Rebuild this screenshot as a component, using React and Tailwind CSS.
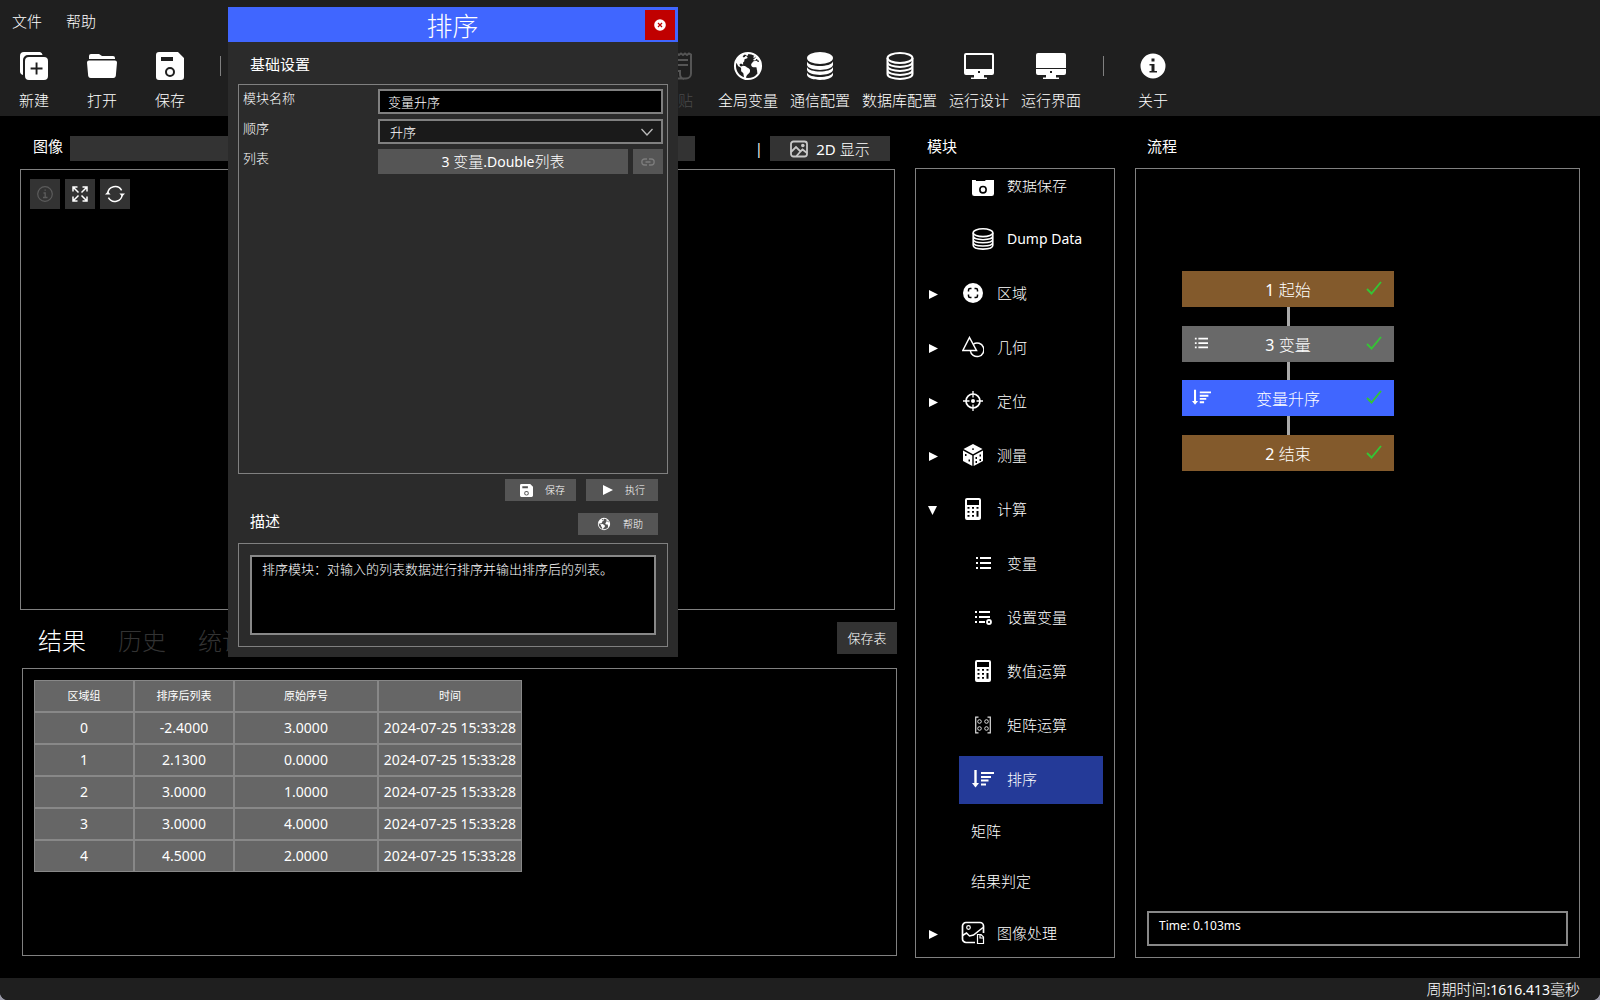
import { useState } from "react";
import { IoEarth } from "react-icons/io5";

/* ---------- icons ---------- */

const Svg = ({ size = 28, box = 28, className = "", children }) => (
  <svg width={size} height={size} viewBox={`0 0 ${box} ${box}`} fill="none" aria-hidden="true" className={className}>
    {children}
  </svg>
);

const NewIcon = () => (
  <Svg>
    <path d="M4 0H18a4 4 0 0 1 4.6 3H8a5 5 0 0 0-5 5v15A4 4 0 0 1 0 19V4a4 4 0 0 1 4-4Z" fill="#fff" />
    <path fillRule="evenodd" d="M9 5h15a4 4 0 0 1 4 4v15a4 4 0 0 1-4 4H9a4 4 0 0 1-4-4V9a4 4 0 0 1 4-4Zm6.6 5.600v5h-5v1.900h5v5h1.900v-5h5v-1.900h-5v-5Z" fill="#fff" />
  </Svg>
);

const OpenIcon = () => (
  <Svg size={30} box={30}>
    <path d="M2 8V5a2 2 0 0 1 2-2h8l3 2h11a2 2 0 0 1 2 2v1Z" fill="#fff" />
    <path d="M2 9.500h26a2 2 0 0 1 2 2L28.800 25a2.500 2.500 0 0 1-2.500 2H3.700a2.500 2.500 0 0 1-2.500-2L0 11.500a2 2 0 0 1 2-2Z" fill="#fff" />
  </Svg>
);

const SaveIcon = ({ size = 28 }) => (
  <Svg size={size}>
    <path
      fillRule="evenodd"
      d="M3 0h19l6 6v19a3 3 0 0 1-3 3H3a3 3 0 0 1-3-3V3a3 3 0 0 1 3-3Zm2 5v4h12V5Zm9 10a5 5 0 1 0 0 10 5 5 0 0 0 0-10Zm0 2a3 3 0 1 1 0 6 3 3 0 0 1 0-6Z"
      fill="#fff"
    />
  </Svg>
);

const PasteIcon = () => (
  <Svg>
    <path d="M5 1.500l2 1.500 2-1.500 2 1.500 2-1.500 2 1.500 2-1.500 2 1.500 2-1.500 2 1.500 2-1.500 2 1v19a5 5 0 0 1-5 5H8M20 27a5 5 0 0 1-4-5v-3H5M12 8h12M12 13h12" stroke="#555" strokeWidth="2" />
  </Svg>
);

const DatabaseSolid = () => (
  <Svg>
    <ellipse cx="14" cy="6" rx="13" ry="6" fill="#fff" />
    <path d="M1 9.500c2 6 24 6 26 0v3.500c-2 6.500-24 6.500-26 0ZM1 15c2 6 24 6 26 0v3c-2 6.500-24 6.500-26 0ZM1 20.500c2 6 24 6 26 0V23c-2 6.600-24 6.600-26 0Z" fill="#fff" />
  </Svg>
);

const DatabaseOutline = ({ size = 28, weight = 2 }) => (
  <Svg size={size}>
    <g stroke="#fff" strokeWidth={weight}>
      <ellipse cx="14" cy="6" rx="12.500" ry="5" />
      <path d="M1.500 6v16c0 6.500 25 6.500 25 0V6M1.500 10c0 6.500 25 6.500 25 0M1.500 14c0 6.500 25 6.500 25 0M1.500 18c0 6.500 25 6.500 25 0" />
    </g>
  </Svg>
);

const Monitor = ({ solid }) => (
  <Svg size={30} box={30}>
    {solid ? (
      <path d="M2 2h26a2 2 0 0 1 2 2v13H0V4a2 2 0 0 1 2-2Z" fill="#fff" />
    ) : (
      <path fillRule="evenodd" d="M2 2h26a2 2 0 0 1 2 2v14H0V4a2 2 0 0 1 2-2Zm0 2v14h26V4Z" fill="#fff" />
    )}
    <path fillRule="evenodd" d="M0 18h30v4a2 2 0 0 1-2 2h-8v2.500h3V28H7v-1.500h3V24H2a2 2 0 0 1-2-2Zm14 2v2h2v-2Z" fill="#fff" />
  </Svg>
);

const InfoSolid = () => (
  <Svg>
    <path
      fillRule="evenodd"
      d="M14 1.500a12.500 12.500 0 1 1 0 25 12.500 12.500 0 0 1 0-25Zm-1.500 5v3h3v-3Zm-2 5.500v1.500h2v5.500h-2v1.500h7.500V19h-2.500v-7Z"
      fill="#fff"
    />
  </Svg>
);

const InfoOutline = () => (
  <Svg size={16} box={16}>
    <circle cx="8" cy="8" r="7.300" stroke="#5c5c5c" strokeWidth="1.200" />
    <path d="M6.500 7H8.200v4.500M6 11.500h4.500M7.500 4.200h1.300" stroke="#5c5c5c" strokeWidth="1.300" />
  </Svg>
);

const ExpandIcon = () => (
  <Svg size={16} box={16}>
    <path d="M1 5.500V1h4.500M1 1l5.500 5.500M10.500 1H15v4.500M15 1 9.500 6.500M1 10.500V15h4.500M1 15l5.500-5.500M15 10.500V15h-4.500M15 15 9.500 9.500" stroke="#fff" strokeWidth="1.500" />
  </Svg>
);

const RefreshIcon = () => (
  <Svg size={20} box={20}>
    <path d="M2.800 9.500a7.400 7.400 0 0 1 13.800-3.200M17.200 10.500A7.400 7.400 0 0 1 3.400 13.700" stroke="#fff" strokeWidth="1.500" />
    <path d="M0 10.500h5.600L2.800 7.500ZM14.400 9.500H20l-2.800 3Z" fill="#fff" />
  </Svg>
);

const PictureIcon = () => (
  <Svg size={18} box={18}>
    <rect x="1" y="1.500" width="16" height="15" rx="2.500" stroke="#c8c8c8" strokeWidth="1.800" />
    <path d="m1 12 5-5 4.500 4.500 2-2 4.500 3.500M6.500 16l4-4.500" stroke="#c8c8c8" strokeWidth="1.800" />
    <circle cx="12.800" cy="5.500" r="1.800" fill="#c8c8c8" />
  </Svg>
);

const CloseIcon = () => (
  <Svg size={12} box={12}>
    <circle cx="6" cy="6" r="5.800" fill="#fff" />
    <path d="m4 4 4 4M8 4 4 8" stroke="#c00000" strokeWidth="1.200" />
  </Svg>
);

const LinkIcon = () => (
  <Svg size={14} box={14}>
    <path d="M6 4H3.800a3 3 0 0 0 0 6H6M8 4h2.200a3 3 0 0 1 0 6H8M4.500 7h5" stroke="#7c7c7c" strokeWidth="1.300" />
  </Svg>
);

const RegionIcon = () => (
  <Svg size={20} box={20}>
    <circle cx="10" cy="10" r="10" fill="#fff" />
    <path d="M5.500 8.500v-1.500a1.500 1.500 0 0 1 1.500-1.500h1.500M11.500 5.500H13a1.500 1.500 0 0 1 1.500 1.500v1.500M14.500 11.500V13a1.500 1.500 0 0 1-1.500 1.500h-1.500M8.500 14.500H7A1.500 1.500 0 0 1 5.500 13v-1.500" stroke="#000" strokeWidth="1.500" />
  </Svg>
);

const GeometryIcon = () => (
  <Svg size={22} box={22}>
    <path d="M7.500 1.500 14.500 14.500H.800Z" stroke="#fff" strokeWidth="1.500" />
    <path d="M11.500 8a6.800 6.800 0 1 1-3.200 6.500" stroke="#fff" strokeWidth="1.500" />
  </Svg>
);

const TargetIcon = () => (
  <Svg size={20} box={20}>
    <circle cx="10" cy="10" r="7" stroke="#fff" strokeWidth="1.700" />
    <circle cx="10" cy="10" r="2" fill="#fff" />
    <path d="M10 0v6.500M10 13.500V20M0 10h6.500M13.500 10H20" stroke="#fff" strokeWidth="1.300" />
  </Svg>
);

const DiceIcon = () => (
  <Svg size={22} box={22}>
    <path d="m11 0 9.500 5L11 10.200 1.500 5Z" fill="#fff" />
    <path d="m1 6.500 9.300 5V22L1 17ZM21 6.500l-9.300 5V22l9.300-5Z" fill="#fff" />
    <g fill="#000">
      <rect x="10" y="4.500" width="2" height="1.200" />
      <rect x="3" y="10" width="1.500" height="2" />
      <rect x="6.500" y="15.500" width="1.500" height="2" />
      <rect x="13.500" y="13" width="1.500" height="2" />
      <rect x="17.500" y="10.500" width="1.500" height="2" />
      <rect x="13.500" y="17" width="1.500" height="2" />
      <rect x="17.500" y="15" width="1.500" height="2" />
    </g>
  </Svg>
);

const CalculatorIcon = () => (
  <Svg size={22} box={22}>
    <path
      fillRule="evenodd"
      d="M5 0h12a2 2 0 0 1 2 2v18a2 2 0 0 1-2 2H5a2 2 0 0 1-2-2V2a2 2 0 0 1 2-2Zm0 2v5h12V2ZM5.500 9v1.800h2V9Zm4.500 0v1.800h2V9Zm4.500 0v1.800h2V9Zm-9 4v1.800h2V13Zm4.500 0v1.800h2V13Zm4.500 0v5.800h2V13Zm-9 4v1.800h2V17Zm4.500 0v1.800h2V17Z"
      fill="#fff"
    />
  </Svg>
);

const ListIcon = ({ size = 16 }) => (
  <Svg size={size} box={16}>
    <path d="M5 3h11M5 8h11M5 13h11M1 3h2M1 8h2M1 13h2" stroke="#fff" strokeWidth="2" />
  </Svg>
);

const ListGearIcon = () => (
  <Svg size={18} box={18}>
    <path d="M5 4h11M5 9h11M5 14h6M1 4h2M1 9h2M1 14h2" stroke="#fff" strokeWidth="2" />
    <circle cx="15" cy="14" r="2" stroke="#fff" strokeWidth="1.800" />
  </Svg>
);

const MatrixIcon = () => (
  <Svg size={18} box={18}>
    <path d="M4.500 1.200H1.700v15.600h2.800M13.500 1.200h2.800v15.600h-2.800" stroke="#ddd" strokeWidth="1.200" />
    <g stroke="#ddd">
      <circle cx="5.500" cy="5.500" r="1.800" />
      <circle cx="12.500" cy="5.500" r="1.800" />
      <circle cx="5.500" cy="12.500" r="1.800" />
      <circle cx="12.500" cy="12.500" r="1.800" />
    </g>
  </Svg>
);

const SortIcon = ({ size = 22 }) => (
  <Svg size={size} box={22}>
    <path d="M3.500 2v14" stroke="#fff" strokeWidth="2.400" />
    <path d="M0 15h7l-3.500 4.500Z" fill="#fff" />
    <path d="M9 5h13M9 9h10M9 12.500h7.500M9 16.500h5" stroke="#fff" strokeWidth="2.100" />
  </Svg>
);

const ImageProcIcon = () => (
  <Svg size={24} box={24}>
    <path d="M14 21.500H5A3.500 3.500 0 0 1 1.500 18V5A3.500 3.500 0 0 1 5 1.500h14A3.500 3.500 0 0 1 22.500 5v7" stroke="#fff" strokeWidth="1.700" />
    <circle cx="7.500" cy="6.500" r="1.800" stroke="#fff" strokeWidth="1.200" />
    <path d="m1.500 14.500 4-2.500 3 3 4-1 9.500-7.500" stroke="#fff" strokeWidth="1.500" />
    <path d="M16.500 13.500h3.500l2.500 2.500v6.500h-6ZM19 13.500V17h3.500" stroke="#fff" strokeWidth="1.200" />
  </Svg>
);

const CheckIcon = () => (
  <Svg size={16} box={16}>
    <path d="m1 8 4.500 4.500L15 1" stroke="#35c435" strokeWidth="1.900" />
  </Svg>
);

const PlayIcon = () => (
  <Svg size={10} box={10}>
    <path d="M0 0 10 5 0 10Z" fill="#fff" />
  </Svg>
);

/* ---------- top bar ---------- */

const ToolButton = ({ icon, label, disabled }) => (
  <button
    type="button"
    disabled={disabled}
    className="flex min-w-14 flex-none flex-col items-center gap-[9px] pt-[7px] text-[15px] leading-5 disabled:text-[#4a4a4a]"
  >
    <span className="flex h-[30px] items-center justify-center">{icon}</span>
    {label}
  </button>
);

const Divider = () => (
  <span className="flex w-5 flex-none justify-center pt-3">
    <span className="h-5 w-px bg-[#808080]" />
  </span>
);

const TopBar = () => (
  <header className="h-[116px] bg-[#1f1f1f]">
    <nav className="flex h-11 items-center gap-6 px-3 pb-0.5 text-[15px] leading-5">
      <button type="button">文件</button>
      <button type="button">帮助</button>
    </nav>
    <div className="flex gap-3 px-1.5">
      <ToolButton icon={<NewIcon />} label="新建" />
      <ToolButton icon={<OpenIcon />} label="打开" />
      <ToolButton icon={<SaveIcon />} label="保存" />
      <Divider />
      <span className="w-[396px] flex-none" />
      <ToolButton icon={<PasteIcon />} label="粘贴" disabled />
      <ToolButton icon={<IoEarth size={32} />} label="全局变量" />
      <ToolButton icon={<DatabaseSolid />} label="通信配置" />
      <ToolButton icon={<DatabaseOutline />} label="数据库配置" />
      <ToolButton icon={<Monitor />} label="运行设计" />
      <ToolButton icon={<Monitor solid />} label="运行界面" />
      <Divider />
      <ToolButton icon={<InfoSolid />} label="关于" />
    </div>
  </header>
);

/* ---------- left column ---------- */

const HEADERS = ["区域组", "排序后列表", "原始序号", "时间"];
const ROWS = [
  ["0", "-2.4000", "3.0000", "2024-07-25 15:33:28"],
  ["1", "2.1300", "0.0000", "2024-07-25 15:33:28"],
  ["2", "3.0000", "1.0000", "2024-07-25 15:33:28"],
  ["3", "3.0000", "4.0000", "2024-07-25 15:33:28"],
  ["4", "4.5000", "2.0000", "2024-07-25 15:33:28"],
];

const SquareButton = ({ label, disabled, children }) => (
  <button
    type="button"
    aria-label={label}
    disabled={disabled}
    className="flex h-[30px] w-[30px] items-center justify-center bg-[#333]"
  >
    {children}
  </button>
);

const ImageSection = () => (
  <section className="mr-0.5 flex flex-1 flex-col">
    <div className="mb-2 flex h-[25px] items-center pr-[5px]">
      <h2 className="w-[50px] flex-none pb-1.5 pl-[13px] text-[15px] leading-5 font-normal">图像</h2>
      <div className="h-[25px] flex-1 bg-[#333]" />
      <span className="ml-14 w-[19px] pl-1 text-[14px] leading-5 font-normal">|</span>
      <button type="button" className="flex h-[25px] w-[120px] items-center justify-center gap-2 bg-[#333] text-[15px] leading-5">
        <PictureIcon />
        <span><span className="font-normal">2D</span> 显示</span>
      </button>
    </div>
    <div className="flex flex-1 items-start gap-[5px] border border-[#808080] p-[9px]">
      <SquareButton label="信息" disabled><InfoOutline /></SquareButton>
      <SquareButton label="全屏"><ExpandIcon /></SquareButton>
      <SquareButton label="刷新"><RefreshIcon /></SquareButton>
    </div>
  </section>
);

const ResultSection = () => (
  <section>
    <div className="flex h-[58px] items-center justify-between">
      <div role="tablist" className="flex gap-8 pt-1 pl-[18px] text-[24px] leading-8">
        <button type="button" role="tab" aria-selected="true">结果</button>
        <button type="button" role="tab" aria-selected="false" className="text-[#333]">历史</button>
        <button type="button" role="tab" aria-selected="false" className="text-[#333]">统计</button>
      </div>
      <button type="button" className="mb-0.5 h-8 w-[60px] bg-[#333] text-[13px] leading-5">保存表</button>
    </div>
    <div className="ml-0.5 h-[288px] border border-[#808080] p-[11px]">
      <table className="w-[488px] table-fixed border-separate border-spacing-0 bg-[#666] text-center font-normal">
        <colgroup>
          <col className="w-[100px]" />
          <col className="w-[100px]" />
          <col className="w-[144px]" />
          <col className="w-[144px]" />
        </colgroup>
        <thead>
          <tr className="h-8">
            {HEADERS.map((h) => (
              <th key={h} className="border border-[#888] p-0 text-[11px] leading-5 font-normal">{h}</th>
            ))}
          </tr>
        </thead>
        <tbody>
          {ROWS.map((row) => (
            <tr key={row[0]} className="h-8">
              {row.map((cell, i) => (
                <td key={i} className="border border-[#888] p-0 text-[14px] leading-5 whitespace-nowrap">{cell}</td>
              ))}
            </tr>
          ))}
        </tbody>
      </table>
    </div>
  </section>
);

/* ---------- module tree ---------- */

const TREE = [
  { label: "数据保存", icon: <SaveIcon size={22} />, child: true },
  { label: "Dump Data", icon: <DatabaseOutline size={22} />, child: true, latin: true },
  { label: "区域", icon: <RegionIcon /> },
  { label: "几何", icon: <GeometryIcon /> },
  { label: "定位", icon: <TargetIcon /> },
  { label: "测量", icon: <DiceIcon /> },
  { label: "计算", icon: <CalculatorIcon />, open: true },
  { label: "变量", icon: <ListIcon />, child: true },
  { label: "设置变量", icon: <ListGearIcon />, child: true },
  { label: "数值运算", icon: <CalculatorIcon />, child: true },
  { label: "矩阵运算", icon: <MatrixIcon />, child: true },
  { label: "排序", icon: <SortIcon />, child: true, selected: true },
  { label: "矩阵", child: true },
  { label: "结果判定", child: true },
  { label: "图像处理", icon: <ImageProcIcon /> },
];

const Arrow = ({ open }) => (
  <span className="w-8 flex-none pt-0.5 pl-px">
    <Svg size={10} box={10}>
      <path d={open ? "M0 1h9L4.500 10Z" : "M1 1v9l9-4.500Z"} fill="#fff" />
    </Svg>
  </span>
);

const TreeItem = ({ label, icon, child, open, selected, latin }) => {
  if (!child) {
    return (
      <button type="button" aria-expanded={Boolean(open)} className="flex h-12 w-full items-center pb-0.5">
        <Arrow open={open} />
        <span className="flex w-7 flex-none justify-center">{icon}</span>
        <span className="pl-2.5">{label}</span>
      </button>
    );
  }
  if (!icon) {
    return (
      <button type="button" className="ml-8 flex h-11 items-center pb-0.5 pl-3">{label}</button>
    );
  }
  return (
    <div className="pl-8">
      <button type="button" className={`flex h-12 w-full items-center pb-0.5 pl-2.5 ${selected ? "bg-[#243a98]" : ""}`}>
        <span className="flex w-7 flex-none justify-center">{icon}</span>
        <span className={`pl-2.5 ${latin ? "text-[14px] font-normal" : ""}`}>{label}</span>
      </button>
    </div>
  );
};

const ModulePanel = () => (
  <section className="flex w-[200px] flex-none flex-col">
    <h2 className="flex h-8 items-start pl-3 text-[15px] leading-5 font-normal">模块</h2>
    <div className="flex-1 border border-[#808080] p-[11px]">
      <ul className="h-[766px] overflow-hidden text-[15px] leading-5">
        {TREE.map((item, i) => (
          <li key={item.label} className={i === 0 ? "-mt-[18px] mb-1.5" : "mb-1.5"}>
            <TreeItem {...item} />
          </li>
        ))}
      </ul>
    </div>
  </section>
);

/* ---------- flow ---------- */

const NODES = [
  { num: "1", label: "起始", color: "bg-[#835a2c]" },
  { num: "3", label: "变量", color: "bg-[#696969]", icon: <ListIcon size={14} /> },
  { num: "", label: "变量升序", color: "bg-[#4066ff]", icon: <SortIcon size={19} /> },
  { num: "2", label: "结束", color: "bg-[#835a2c]" },
];

const FlowPanel = () => (
  <section className="flex flex-[445] flex-col">
    <h2 className="flex h-8 items-start pl-3 text-[15px] leading-5 font-normal">流程</h2>
    <div className="flex flex-1 flex-col justify-between border border-[#808080] p-[11px]">
      <ol className="ml-[35px] flex w-[212px] flex-col pt-[91px]">
        {NODES.map((n, i) => (
          <li key={n.label}>
            {i > 0 && <div className={`ml-[105px] w-[3px] bg-[#aaa] ${i === 2 ? "h-[18px]" : "h-[19px]"}`} />}
            <button type="button" className={`flex h-9 w-full items-center text-[16px] leading-5 ${n.color}`}>
              <span className="flex w-10 justify-center pr-0.5 pb-0.5">{n.icon}</span>
              <span className="flex-1 pt-0.5 text-center">
                {n.num && <span className="font-normal">{n.num} </span>}
                {n.label}
              </span>
              <span className="flex w-10 justify-center"><CheckIcon /></span>
            </button>
          </li>
        ))}
      </ol>
      <div className="h-[35px] border-2 border-[#888] px-2.5 py-[3px] text-[12px] leading-5 font-normal">Time: 0.103ms</div>
    </div>
  </section>
);

/* ---------- dialog ---------- */

const ActionButton = ({ icon, label, className }) => (
  <button type="button" className={`flex h-[22px] items-center justify-center gap-3 bg-[#555] pl-1 text-[10px] leading-4 ${className}`}>
    {icon}
    {label}
  </button>
);

const SortDialog = () => {
  const [name, setName] = useState("变量升序");
  const [order, setOrder] = useState("升序");
  return (
    <div role="dialog" aria-labelledby="dialog-title" className="absolute top-[7px] left-[228px] w-[450px] bg-[#2b2b2b] pb-2.5">
      <div className="flex h-[35px] items-center bg-[#4066ff] pr-[3px]">
        <h1 id="dialog-title" className="flex-1 pt-0.5 pl-8 text-center text-[26px] leading-8">排序</h1>
        <button type="button" aria-label="关闭" className="flex h-[30px] w-[30px] items-center justify-center bg-[#c00000]">
          <CloseIcon />
        </button>
      </div>
      <div className="px-2.5">
        <h2 className="flex h-[42px] items-center pt-px pl-3 text-[15px] leading-5 font-normal">基础设置</h2>
        <div className="flex h-[390px] flex-col gap-[5px] border border-[#808080] p-1 text-[13px] leading-[18px]">
          <div className="flex h-[25px]">
            <label htmlFor="module-name" className="w-[135px]">模块名称</label>
            <input
              id="module-name"
              value={name}
              onChange={(e) => setName(e.target.value)}
              className="min-w-0 flex-1 border-2 border-[#808080] bg-black px-2 outline-none"
            />
          </div>
          <div className="flex h-[25px]">
            <label htmlFor="order" className="w-[135px]">顺序</label>
            <div className="relative flex-1">
              <select
                id="order"
                value={order}
                onChange={(e) => setOrder(e.target.value)}
                className="h-full w-full appearance-none border-2 border-[#808080] bg-[#1a1a1a] px-2.5 outline-none"
              >
                <option>升序</option>
                <option>降序</option>
              </select>
              <span className="pointer-events-none absolute inset-y-0 right-2.5 flex items-center">
                <Svg size={12} box={12}>
                  <path d="m.500 3 5.500 6 5.500-6" stroke="#bbb" strokeWidth="1.300" />
                </Svg>
              </span>
            </div>
          </div>
          <div className="flex h-[25px]">
            <label htmlFor="source-list" className="w-[135px]">列表</label>
            <button id="source-list" type="button" className="flex-1 bg-[#555] text-[15px] leading-5">
              <span className="text-[14px] font-normal">3 </span>变量<span className="text-[14px] font-normal">.Double</span>列表
            </button>
            <button type="button" aria-label="链接" className="ml-[5px] flex w-[30px] items-center justify-center bg-[#555]">
              <LinkIcon />
            </button>
          </div>
        </div>
        <div className="flex justify-end gap-2.5 pt-[5px] pr-2.5">
          <ActionButton icon={<SaveIcon size={13} />} label="保存" className="w-[71px]" />
          <ActionButton icon={<PlayIcon />} label="执行" className="w-[72px]" />
        </div>
        <div className="flex h-[42px] items-center justify-between pr-2.5 pl-3">
          <h2 className="pb-0.5 text-[15px] leading-5 font-normal">描述</h2>
          <ActionButton icon={<IoEarth size={14} />} label="帮助" className="mt-1 w-20" />
        </div>
        <div className="border border-[#808080] p-[11px]">
          <textarea
            aria-label="描述"
            readOnly
            value="排序模块：对输入的列表数据进行排序并输出排序后的列表。"
            className="block h-20 w-full resize-none border-2 border-[#888] bg-black px-2.5 py-0.5 text-[13px] leading-5 outline-none"
          />
        </div>
      </div>
    </div>
  );
};

/* ---------- page ---------- */

export default function App() {
  return (
    <div className="bg-[#9a9aa8]">
      <div className="relative flex min-h-screen flex-col overflow-hidden rounded-b-lg bg-black font-['Noto_Sans','Noto_Sans_CJK_SC',sans-serif] font-light text-white">
        <TopBar />
        <main className="flex flex-1 px-5 pt-5">
          <div className="mr-[18px] flex flex-[877] flex-col pb-[22px]">
            <ImageSection />
            <ResultSection />
          </div>
          <div className="flex flex-[665] gap-5 pb-5">
            <ModulePanel />
            <FlowPanel />
          </div>
        </main>
        <footer className="flex h-[22px] items-center justify-end bg-[#1f1f1f] pr-5 text-[15px] leading-5">
          <span>周期时间<span className="text-[14px] font-normal">:1616.413</span>毫秒</span>
        </footer>
        <SortDialog />
      </div>
    </div>
  );
}
